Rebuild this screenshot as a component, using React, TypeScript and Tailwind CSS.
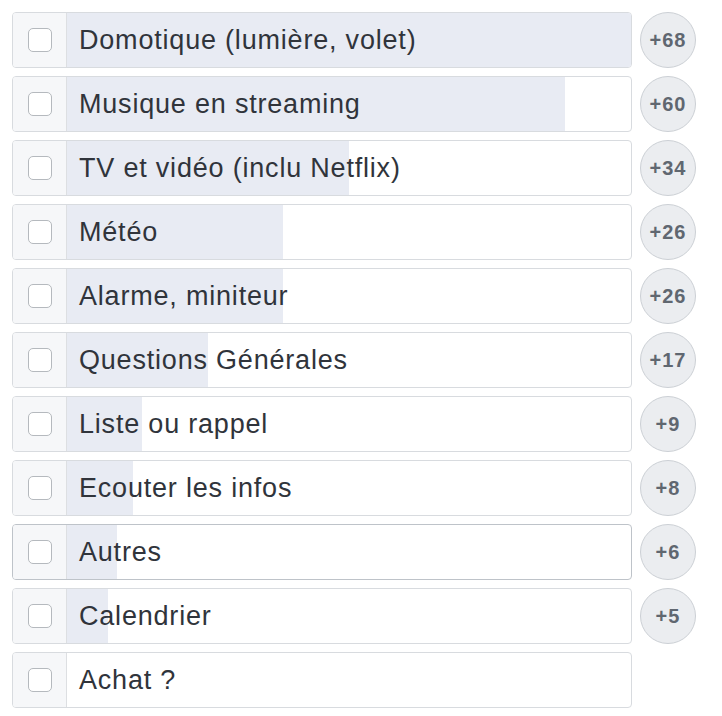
import React from "react"

const options = [
  { label: "Domotique (lumière, volet)", votes: 68 },
  { label: "Musique en streaming", votes: 60 },
  { label: "TV et vidéo (inclu Netflix)", votes: 34 },
  { label: "Météo", votes: 26 },
  { label: "Alarme, miniteur", votes: 26 },
  { label: "Questions Générales", votes: 17 },
  { label: "Liste ou rappel", votes: 9 },
  { label: "Ecouter les infos", votes: 8 },
  { label: "Autres", votes: 6, hover: true },
  { label: "Calendrier", votes: 5 },
  { label: "Achat ?", votes: 0 },
]

const max = 68

function PollRow({ label, votes, hover }: { label: string; votes: number; hover?: boolean }) {
  return (
    <div className="flex items-center gap-2">
      <div
        className={
          "flex h-14 w-[620px] overflow-hidden rounded-[4px] border bg-white " +
          (hover ? "border-[#bec3c9]" : "border-[#d8dbdf]")
        }
      >
        <div className="flex w-[54px] shrink-0 items-center justify-center border-r border-[#dddfe2] bg-[#f6f7f9]">
          <div className="h-6 w-6 rounded-[5px] border border-[#b5b9be] bg-white" />
        </div>
        <div className="relative flex-1">
          <div
            className="absolute inset-y-0 left-0 bg-[#e8ebf3]"
            style={{ width: `${(votes / max) * 100}%` }}
          />
          <div className="relative flex h-full items-center pl-3 text-[27px] tracking-[0.8px] text-[#30343b]">
            {label}
          </div>
        </div>
      </div>
      {votes > 0 ? (
        <div className="flex h-14 w-14 shrink-0 items-center justify-center rounded-full border border-[#ccd0d5] bg-[#ebedf0] text-[20px] font-bold tracking-[1px] text-[#606770]">
          +{votes}
        </div>
      ) : (
        <div className="h-14 w-14 shrink-0" />
      )}
    </div>
  )
}

export default function App() {
  return (
    <div
      className="min-h-screen bg-white pl-3 pt-3"
      style={{ fontFamily: '"Liberation Sans", Arial, sans-serif' }}
    >
      <div className="flex flex-col gap-2">
        {options.map((o) => (
          <PollRow key={o.label} {...o} />
        ))}
      </div>
    </div>
  )
}
